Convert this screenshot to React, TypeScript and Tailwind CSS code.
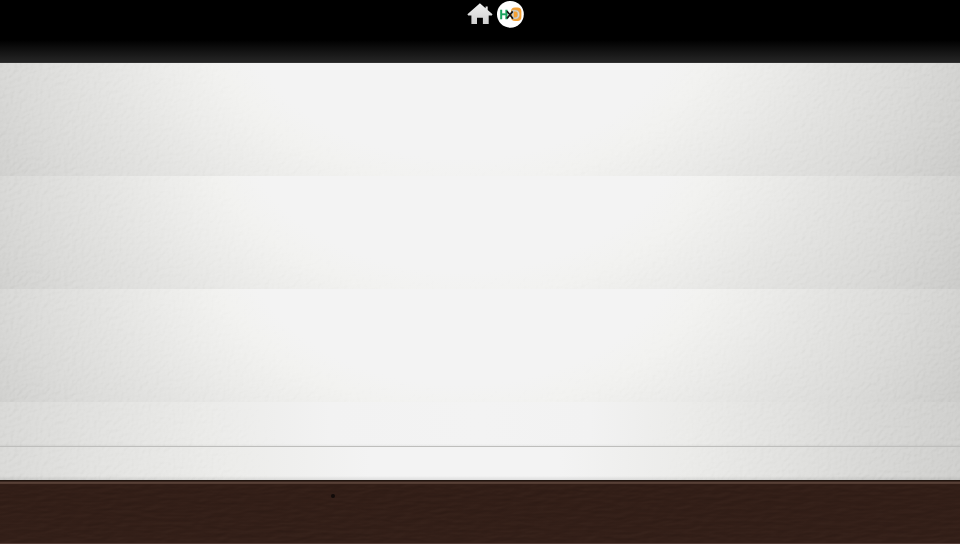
import React from "react";

function Grain({ id, freq, strength, seed }: { id: string; freq: string; strength: number; seed: number }) {
  return (
    <svg className="absolute inset-0 h-full w-full" aria-hidden="true">
      <filter id={id} x="0" y="0" width="100%" height="100%" colorInterpolationFilters="sRGB">
        <feTurbulence type="fractalNoise" baseFrequency={freq} numOctaves={2} seed={seed} />
        <feColorMatrix values="0 0 0 0 0.5  0 0 0 0 0.5  0 0 0 0 0.5  1 0 0 0 0" />
        <feDiffuseLighting surfaceScale={strength} lightingColor="#fff" diffuseConstant={0.707}>
          <feDistantLight azimuth={225} elevation={45} />
        </feDiffuseLighting>
      </filter>
      <rect width="100%" height="100%" filter={`url(#${id})`} />
    </svg>
  );
}

function Panel({ className, id }: { className: string; id: string }) {
  return (
    <div className={`relative shrink-0 ${className}`}>
      <div className="absolute inset-0 opacity-50 mix-blend-soft-light [mask-image:radial-gradient(245px_173px_at_462px_-60px,transparent_85%,black_108%)]">
        <Grain id={id} freq="0.24" strength={0.8} seed={4} />
      </div>
    </div>
  );
}

const tall =
  "h-[113px] bg-[radial-gradient(245px_173px_at_462px_-60px,#f3f3f3_90%,#f2f2f0_105%,#ebebe9_130%,#e3e3e1_155%,#dadad8_187%,#d2d2d0_210%,#cacac8_230%)]";

function HomeIcon() {
  return (
    <svg width="26" height="22" viewBox="0 0 26 22" className="mt-[3px]">
      <defs>
        <linearGradient id="homeFill" x1="0" y1="0" x2="0" y2="1">
          <stop offset="0" stopColor="#f0f0f0" />
          <stop offset="1" stopColor="#d0d0d0" />
        </linearGradient>
      </defs>
      <path d="M12.9 0.3 L18.6 5.2 V3.6 H20.7 V7 L25.5 11.3 L24.8 12.4 H21.7 V20.9 H15.9 V14.8 H10 V20.9 H4.4 V12.4 H1.2 L0.4 11.3 Z" fill="url(#homeFill)" />
    </svg>
  );
}

function Logo() {
  return (
    <svg width="28" height="28" viewBox="0 0 28 28" className="font-['Liberation_Sans',sans-serif]">
      <circle cx="14.4" cy="14.3" r="13.4" fill="#fff" />
      <rect x="15" y="7.6" width="10.4" height="13.4" rx="4" fill="#f5a032" />
      <text x="3.4" y="18.7" fontSize="12" fontWeight="bold" fill="#18a45f" stroke="#18a45f" strokeWidth=".3" textLength="8.6" lengthAdjust="spacingAndGlyphs">H</text>
      <text x="15.2" y="18.7" fontSize="12" fontWeight="bold" fill="#d8d4ca" stroke="#b9ab92" strokeWidth=".3" textLength="8.8" lengthAdjust="spacingAndGlyphs">D</text>
      <path d="M11 11.2 L17 18.8 M16.7 11.4 L11 18.4" stroke="#111" strokeWidth="1.7" />
    </svg>
  );
}

export default function App() {
  return (
    <main className="flex h-[544px] w-[960px] flex-col overflow-hidden bg-black">
      <header className="flex h-[63px] shrink-0 items-start gap-[3px] border-b border-[#303030] bg-[linear-gradient(#000_0px,#000_40px,#111_50px,#222_60px)] pl-[467px]">
        <HomeIcon />
        <Logo />
      </header>
      <Panel id="wallA" className={tall} />
      <Panel id="wallB" className={tall} />
      <Panel id="wallC" className={tall} />
      <Panel
        id="wallD"
        className="h-[45px] border-b border-[#bebebc] bg-[linear-gradient(#0000_42px,#0000000c_44px),linear-gradient(90deg,#d9d9d7_0px,#e2e2e0_100px,#ebebe9_210px,#f2f2f2_330px,#f3f3f3_480px,#f2f2f2_590px,#ebebe9_690px,#e1e1df_790px,#d8d8d6_870px,#d0d0ce_960px)]"
      />
      <Panel
        id="wallE"
        className="h-[33px] bg-[linear-gradient(#0000_29px,#00000018_33px),linear-gradient(90deg,#dadad8_0px,#e3e3e1_100px,#ececea_230px,#f3f3f3_370px,#f3f3f3_560px,#ebebe9_690px,#e1e1df_790px,#d8d8d6_870px,#d0d0ce_960px)]"
      />
      <footer className="relative h-[64px] shrink-0 bg-[linear-gradient(#21150f_0px,#21150f_1px,#38241d_1px,#3a2820_2px,#594239_2px,#50392f_4px,#321e17_4px,#331f18_63px,#513a34_63px)]">
        <div className="absolute inset-x-0 top-[4px] bottom-px opacity-30 mix-blend-soft-light">
          <Grain id="wood" freq="0.06 0.25" strength={0.9} seed={8} />
        </div>
        <span className="absolute left-[331px] top-[14px] h-[4px] w-[4px] rounded-full bg-[#110b09]" />
      </footer>
    </main>
  );
}
